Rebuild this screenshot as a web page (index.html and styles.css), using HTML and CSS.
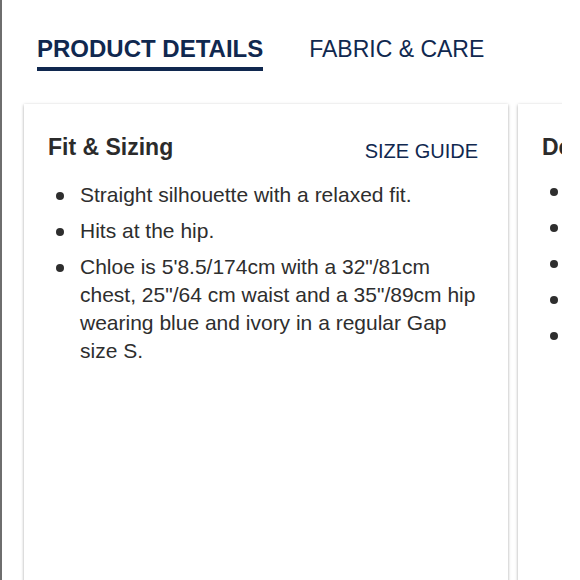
FILE: index.html
```html
<!DOCTYPE html>
<html lang="en">
<head>
<meta charset="utf-8">
<title>Product Details</title>
<link rel="stylesheet" href="styles.css">
</head>
<body>
<div class="page">
  <nav class="tabs">
    <a class="tab tab-active">PRODUCT DETAILS</a>
    <a class="tab">FABRIC &amp; CARE</a>
  </nav>
  <div class="cards">
    <section class="card card-main">
      <header class="card-head">
        <h2 class="card-title">Fit &amp; Sizing</h2>
        <a class="card-link">SIZE GUIDE</a>
      </header>
      <ul class="bullets">
        <li>Straight silhouette with a relaxed fit.</li>
        <li>Hits at the hip.</li>
        <li>Chloe is 5'8.5/174cm with a 32"/81cm chest, 25"/64 cm waist and a 35"/89cm hip wearing blue and ivory in a regular Gap size S.</li>
      </ul>
    </section>
    <section class="card card-next">
      <header class="card-head">
        <h2 class="card-title">Details</h2>
      </header>
      <ul class="bullets">
        <li>Soft knit.</li>
        <li>Crewneck.</li>
        <li>Long sleeves.</li>
        <li>Ribbed trim.</li>
        <li>Stripes.</li>
      </ul>
    </section>
  </div>
</div>
</body>
</html>
```

FILE: styles.css
```css
html, body {
  margin: 0;
  padding: 0;
  background: #fff;
}

body {
  font-family: "Liberation Sans", Arial, sans-serif;
  color: #333;
  overflow: hidden;
}

.page {
  height: 580px;
  border-left: 2px solid #6e6e6e;
  box-sizing: border-box;
  overflow: hidden;
}

.tabs {
  display: flex;
  align-items: baseline;
  gap: 46px;
  padding: 34px 0 0 35px;
}

.tab {
  font-size: 23px;
  line-height: 30px;
  color: #10284f;
  padding-bottom: 3px;
  border-bottom: 4px solid transparent;
  white-space: nowrap;
}

.tab-active {
  font-size: 24px;
  font-weight: bold;
  border-bottom-color: #10284f;
}

.cards {
  display: flex;
  gap: 10px;
  margin-top: 30px;
  margin-left: 19px;
  padding-left: 3px;
  width: 538px;
  height: 600px;
  overflow: hidden;
}

.card {
  flex: none;
  background: #fff;
  box-shadow: 0 1px 3px rgba(0, 0, 0, 0.35);
  padding: 29px 24px 24px 24px;
  box-sizing: border-box;
  height: 700px;
  margin-top: 3px;
}

.card-main {
  width: 484px;
}

.card-next {
  width: 484px;
}

.card-head {
  display: flex;
  justify-content: space-between;
  align-items: flex-start;
}

.card-title {
  margin: 0;
  font-size: 23px;
  line-height: 28px;
  font-weight: bold;
  color: #2b2b2b;
  white-space: nowrap;
}

.card-link {
  font-size: 20px;
  line-height: 28px;
  padding-top: 4px;
  padding-right: 6px;
  color: #10284f;
}

.bullets {
  list-style: none;
  margin: 16px 0 0 0;
  padding: 0;
  display: flex;
  flex-direction: column;
  gap: 8px;
}

.bullets li {
  position: relative;
  padding-left: 32px;
  font-size: 21px;
  line-height: 28px;
  color: #2e2e2e;
}

.bullets li::before {
  content: "";
  position: absolute;
  left: 8px;
  top: 11px;
  width: 8px;
  height: 8px;
  border-radius: 50%;
  background: #2e2e2e;
}

.card-next .bullets li {
  white-space: nowrap;
}
```
